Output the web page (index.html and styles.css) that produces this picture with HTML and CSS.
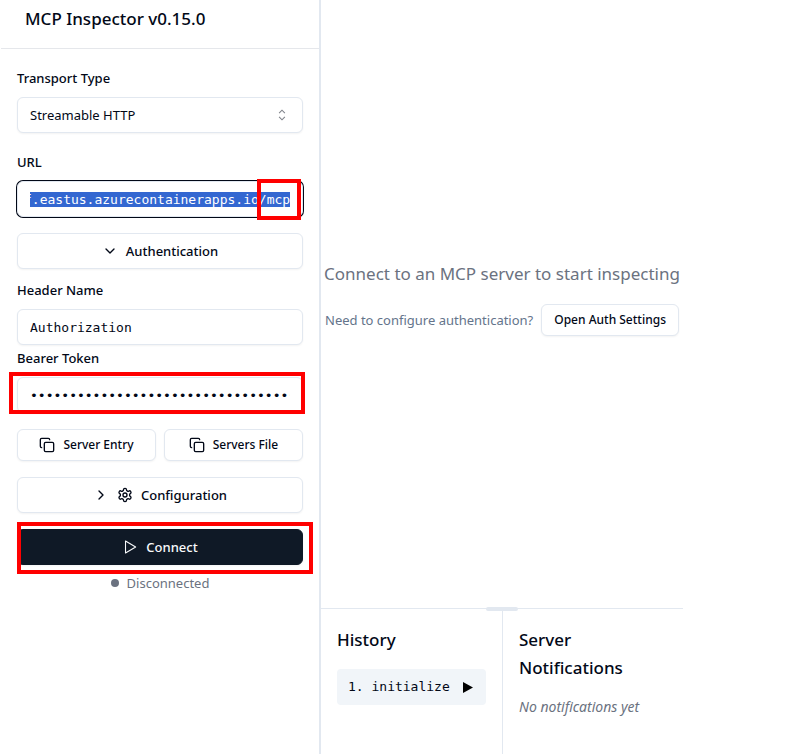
FILE: index.html
```html
<!DOCTYPE html>
<html lang="en">
<head>
	<meta charset="UTF-8" />
	<meta name="viewport" content="width=device-width, initial-scale=1.0" />
	<title>MCP Inspector</title>
	<link rel="stylesheet" href="styles.css">
</head>
<body>
	<div class="app">
		<aside class="sidebar">
			<header class="head">
				<h1>MCP Inspector v0.15.0</h1>
			</header>
			<div class="form">
				<div class="field">
					<label for="transport">Transport Type</label>
					<div class="select-box">
						<select id="transport" class="control">
							<option>Streamable HTTP</option>
						</select>
						<svg class="updown" viewBox="0 0 15 15" fill="none" stroke="currentColor"><path d="M4.8 5.7 7.5 3l2.7 2.7M4.8 9.3 7.5 12l2.7-2.7"/></svg>
					</div>
				</div>
				<div class="field marked">
					<label for="url">URL</label>
					<input id="url" class="control mono" type="text" spellcheck="false" value="f.eastus.azurecontainerapps.io/mcp">
					<span class="mark mark-url"></span>
				</div>
				<div class="auth">
					<button type="button" class="btn">
						<svg class="icon" viewBox="0 0 24 24"><path d="m6 9 6 6 6-6"/></svg>
						Authentication
					</button>
					<div class="auth-body">
						<div class="field">
							<label for="header">Header Name</label>
							<input id="header" class="control mono" type="text" spellcheck="false" value="Authorization">
						</div>
						<div class="field marked">
							<label for="token">Bearer Token</label>
							<input id="token" class="control mono" type="password" value="0123456789012345678901234567890123">
							<span class="mark mark-token"></span>
						</div>
					</div>
				</div>
				<div class="pair">
					<button type="button" class="btn btn-sm">
						<svg class="icon" viewBox="0 0 24 24"><rect x="8" y="8" width="14" height="14" rx="2"/><path d="M4 16c-1.1 0-2-.9-2-2V4c0-1.1.9-2 2-2h10c1.1 0 2 .9 2 2"/></svg>
						Server Entry
					</button>
					<button type="button" class="btn btn-sm">
						<svg class="icon" viewBox="0 0 24 24"><rect x="8" y="8" width="14" height="14" rx="2"/><path d="M4 16c-1.1 0-2-.9-2-2V4c0-1.1.9-2 2-2h10c1.1 0 2 .9 2 2"/></svg>
						Servers File
					</button>
				</div>
				<button type="button" class="btn">
					<svg class="icon" viewBox="0 0 24 24"><path d="m9 18 6-6-6-6"/></svg>
					<svg class="icon" viewBox="0 0 24 24"><path d="M12.22 2h-.44a2 2 0 0 0-2 2v.18a2 2 0 0 1-1 1.73l-.43.25a2 2 0 0 1-2 0l-.15-.08a2 2 0 0 0-2.73.73l-.22.38a2 2 0 0 0 .73 2.73l.15.1a2 2 0 0 1 1 1.72v.51a2 2 0 0 1-1 1.74l-.15.09a2 2 0 0 0-.73 2.73l.22.38a2 2 0 0 0 2.73.73l.15-.08a2 2 0 0 1 2 0l.43.25a2 2 0 0 1 1 1.73V20a2 2 0 0 0 2 2h.44a2 2 0 0 0 2-2v-.18a2 2 0 0 1 1-1.73l.43-.25a2 2 0 0 1 2 0l.15.08a2 2 0 0 0 2.73-.73l.22-.39a2 2 0 0 0-.73-2.73l-.15-.08a2 2 0 0 1-1-1.74v-.5a2 2 0 0 1 1-1.74l.15-.09a2 2 0 0 0 .73-2.73l-.22-.38a2 2 0 0 0-2.73-.73l-.15.08a2 2 0 0 1-2 0l-.43-.25a2 2 0 0 1-1-1.73V4a2 2 0 0 0-2-2z"/><circle cx="12" cy="12" r="3"/></svg>
					Configuration
				</button>
				<div class="connect marked">
					<button type="button" class="btn btn-dark">
						<svg class="icon" viewBox="0 0 15 15"><path d="M3.3 1.9v11.2L12.8 7.5z"/></svg>
						Connect
					</button>
					<span class="mark mark-connect"></span>
					<p class="status"><i class="dot"></i>Disconnected</p>
				</div>
			</div>
		</aside>
		<main class="main">
			<section class="empty">
				<p class="lead">Connect to an MCP server to start inspecting</p>
				<div class="hint">
					<p>Need to configure authentication?</p>
					<button type="button" class="btn btn-sm">Open Auth Settings</button>
				</div>
			</section>
			<section class="bottom">
				<span class="handle"></span>
				<div class="pane">
					<h2>History</h2>
					<button type="button" class="item mono"><span>1. initialize</span><svg class="tri" viewBox="0 0 10 11"><path d="M0 0v11l10-5.5z"/></svg></button>
				</div>
				<div class="pane">
					<h2>Server Notifications</h2>
					<p class="none">No notifications yet</p>
				</div>
			</section>
		</main>
	</div>
	<script type="text/javascript">
		// select the whole url and show its end
		let url=document.getElementById("url");
		url.focus();
		url.select();
		url.scrollLeft=url.scrollWidth;
	</script>
</body>
</html>
```

FILE: styles.css
```css
*{margin: 0;padding: 0;box-sizing: border-box;}
body{
	font-family: "Noto Sans", "Open Sans", sans-serif;
	font-size: 13px;line-height: 20px;
	color: #020817;background: #fff;
}
button,input,select{font: inherit;color: inherit;}
.mono{font-family: "DejaVu Sans Mono", "Liberation Mono", monospace;}
.app{
	display: flex;min-height: 100vh;
	padding-right: 117px;
}

/* sidebar */
.sidebar{
	flex: 0 0 321px;
	border-left: 1px solid #fff;border-right: 2px solid #e2e8f0;
}
.head{padding: 5px 24px 15px;border-bottom: 1px solid #e5e7eb;}
.head h1{font-size: 17px;line-height: 28px;font-weight: 500;}
.form{
	display: flex;flex-direction: column;
	gap: 16px;padding: 16px;
}
.field{display: flex;flex-direction: column;gap: 8px;}
.field label{padding-top: 2px;line-height: 22px;font-weight: 500;}
.control{
	width: 100%;height: 36px;padding: 4px 12px;
	border: 1px solid #e2e8f0;border-radius: 6px;
	background: #fff;box-shadow: 0 1px 2px rgba(0,0,0,.05);
	outline: none;appearance: none;
}
.control:focus{border-color: #e2e8f0;box-shadow: 0 0 0 1px #020817;}
.control::selection{background: #3367d1;color: #fff;}
.select-box{display: grid;align-items: center;}
.select-box>*{grid-area: 1 / 1;}
.updown{
	width: 16px;height: 16px;margin-right: 13px;
	justify-self: end;opacity: .5;pointer-events: none;
}
.auth{display: flex;flex-direction: column;gap: 8px;}

/* buttons */
.btn{
	display: flex;align-items: center;justify-content: center;
	gap: 8px;width: 100%;height: 36px;padding: 0 12px;
	border: 1px solid #e2e8f0;border-radius: 6px;
	background: #fff;box-shadow: 0 1px 2px rgba(0,0,0,.05);
	font-weight: 500;white-space: nowrap;
}
.btn-sm{height: 32px;font-size: 12px;}
.btn-dark{background: #0f1926;border-color: #0f1926;color: #f8fafc;}
.icon{
	width: 16px;height: 16px;
	fill: none;stroke: currentColor;stroke-width: 2;
	stroke-linecap: round;stroke-linejoin: round;
}
.btn-dark .icon{stroke-width: 1;}
.pair{display: grid;grid-template-columns: 1fr 1fr;gap: 8px;}
.status{
	display: flex;align-items: center;justify-content: center;
	gap: 8px;margin-top: 8px;color: #6b7280;
}
.dot{width: 8px;height: 8px;border-radius: 50%;background: #6b7280;}

/* red highlight frames */
.marked{position: relative;}
.mark{position: absolute;border: 4px solid #f00;pointer-events: none;}
.mark-url{top: 30px;right: 2px;width: 44px;height: 41px;}
.mark-token{top: 27px;left: -8px;right: -2px;height: 42px;}
.mark-connect{top: -7px;left: 0;right: -10px;height: 52px;}

/* main */
.main{flex: 1;min-width: 0;display: flex;flex-direction: column;}
.empty{
	flex: 1;display: flex;flex-direction: column;
	align-items: center;justify-content: center;
	gap: 16px;padding-bottom: 12px;
	color: #6b7280;white-space: nowrap;
}
.lead{font-size: 17px;line-height: 28px;}
.hint{display: flex;align-items: center;gap: 8px;color: #64748b;}
.hint .btn{width: auto;color: #020817;}
.bottom{
	position: relative;display: grid;grid-template-columns: 1fr 1fr;
	min-height: 146px;border-top: 1px solid #e2e8f0;
}
.handle{
	position: absolute;top: -2px;left: calc(50% - 16px);
	width: 32px;height: 4px;border-radius: 2px;background: #e2e8f0;
}
.pane{padding: 17px 16px 16px;}
.pane+.pane{border-left: 1px solid #e2e8f0;}
.pane h2{font-size: 17px;line-height: 28px;font-weight: 500;margin-bottom: 15px;}
.item{
	display: flex;align-items: center;justify-content: space-between;
	width: 100%;height: 36px;padding: 0 13px 0 11px;
	border: 0;border-radius: 4px;background: #f1f5f9;
}
.tri{width: 10px;height: 11px;}
.none{font-size: 14px;color: #6b7280;font-style: italic;}
```
